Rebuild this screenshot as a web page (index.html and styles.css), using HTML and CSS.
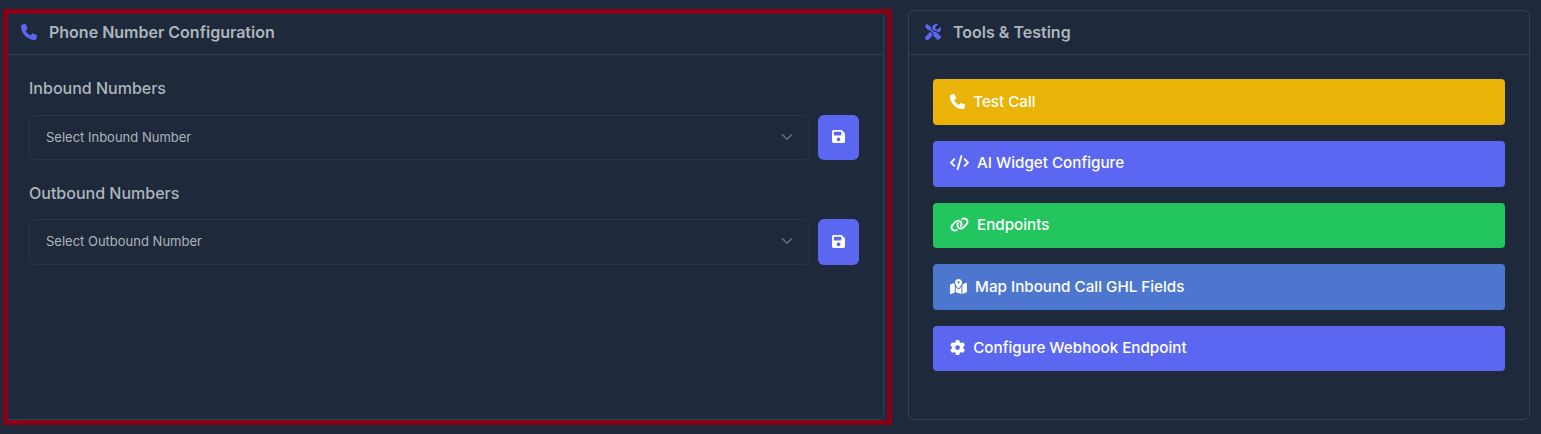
FILE: index.html
```html
<!DOCTYPE html>
<html lang="en">
<head>
<meta charset="utf-8">
<title>Phone Number Configuration</title>
<link rel="stylesheet" href="styles.css">
</head>
<body>
<main class="page">
  <section class="card card-phone">
    <header class="card-head">
      <svg class="icon head-icon" viewBox="0 0 512 512"><path d="M164.9 24.6c-7.7-18.6-28-28.5-47.4-23.2l-88 24C12.1 30.2 0 46 0 64C0 311.4 200.6 512 448 512c18 0 33.8-12.1 38.6-29.5l24-88c5.3-19.4-4.6-39.7-23.2-47.4l-96-40c-16.3-6.8-35.2-2.1-46.3 11.6L304.7 368C234.3 334.7 177.3 277.7 144 207.3L193.3 167c13.7-11.2 18.4-30 11.6-46.3l-40-96z"/></svg>
      <h2 class="card-title">Phone Number Configuration</h2>
    </header>
    <div class="card-body">
      <div class="field">
        <h3 class="field-label">Inbound Numbers</h3>
        <div class="field-row">
          <div class="select">
            <span>Select Inbound Number</span>
            <svg class="chevron" viewBox="0 0 16 16"><path d="M2 5l6 6 6-6"/></svg>
          </div>
          <button class="save" type="button"><svg class="icon icon-save" viewBox="0 0 448 512"><path d="M64 32C28.7 32 0 60.7 0 96V416c0 35.3 28.7 64 64 64H384c35.3 0 64-28.7 64-64V173.3c0-17-6.7-33.3-18.7-45.3L352 50.7C340 38.7 323.7 32 306.7 32H64zm0 96c0-17.7 14.3-32 32-32H288c17.7 0 32 14.3 32 32v64c0 17.7-14.3 32-32 32H96c-17.7 0-32-14.3-32-32V128zM224 288a64 64 0 1 1 0 128 64 64 0 1 1 0-128z"/></svg></button>
        </div>
      </div>
      <div class="field">
        <h3 class="field-label">Outbound Numbers</h3>
        <div class="field-row">
          <div class="select">
            <span>Select Outbound Number</span>
            <svg class="chevron" viewBox="0 0 16 16"><path d="M2 5l6 6 6-6"/></svg>
          </div>
          <button class="save" type="button"><svg class="icon icon-save" viewBox="0 0 448 512"><path d="M64 32C28.7 32 0 60.7 0 96V416c0 35.3 28.7 64 64 64H384c35.3 0 64-28.7 64-64V173.3c0-17-6.7-33.3-18.7-45.3L352 50.7C340 38.7 323.7 32 306.7 32H64zm0 96c0-17.7 14.3-32 32-32H288c17.7 0 32 14.3 32 32v64c0 17.7-14.3 32-32 32H96c-17.7 0-32-14.3-32-32V128zM224 288a64 64 0 1 1 0 128 64 64 0 1 1 0-128z"/></svg></button>
        </div>
      </div>
    </div>
  </section>

  <section class="card card-tools">
    <header class="card-head">
      <svg class="icon head-icon" viewBox="0 0 512 512"><path d="M78.6 5C69.1-2.4 55.6-1.5 47 7L7 47c-8.5 8.5-9.4 22-2.1 31.6l80 104c4.5 5.9 11.6 9.4 19 9.4h54.1l109 109c-14.7 29-10 65.4 14.3 89.6l112 112c12.5 12.5 32.8 12.5 45.3 0l64-64c12.5-12.5 12.5-32.8 0-45.3l-112-112c-24.2-24.2-60.6-29-89.6-14.3l-109-109V104c0-7.5-3.5-14.5-9.4-19L78.6 5zM19.9 396.1C7.2 408.8 0 426.1 0 444.1C0 481.6 30.4 512 67.9 512c18 0 35.3-7.2 48-19.9L233.7 374.3c-7.8-20.9-9-43.6-3.6-65.1l-61.7-61.7L19.9 396.1zM512 144c0-10.5-1.1-20.7-3.2-30.5c-2.4-11.2-16.1-14.1-24.2-6l-63.9 63.9c-3 3-7.1 4.7-11.3 4.7H352c-8.8 0-16-7.2-16-16V102.6c0-4.2 1.7-8.3 4.7-11.3l63.9-63.9c8.1-8.1 5.2-21.8-6-24.2C388.7 1.1 378.5 0 368 0C288.5 0 224 64.5 224 144l0 .8 85.3 85.3c36-9.1 75.8 .5 104 28.7L429 274.5c49-23 83-72.8 83-130.5z"/></svg>
      <h2 class="card-title">Tools &amp; Testing</h2>
    </header>
    <div class="card-body tool-list">
      <button class="tool tool-yellow" type="button">
        <svg class="icon tool-icon" viewBox="0 0 512 512"><path d="M164.9 24.6c-7.7-18.6-28-28.5-47.4-23.2l-88 24C12.1 30.2 0 46 0 64C0 311.4 200.6 512 448 512c18 0 33.8-12.1 38.6-29.5l24-88c5.3-19.4-4.6-39.7-23.2-47.4l-96-40c-16.3-6.8-35.2-2.1-46.3 11.6L304.7 368C234.3 334.7 177.3 277.7 144 207.3L193.3 167c13.7-11.2 18.4-30 11.6-46.3l-40-96z"/></svg>
        Test Call
      </button>
      <button class="tool tool-indigo" type="button">
        <svg class="icon tool-icon icon-wide" viewBox="0 0 640 512"><path d="M392.8 1.2c-17-4.9-34.7 5-39.6 22l-128 448c-4.9 17 5 34.7 22 39.6s34.7-5 39.6-22l128-448c4.9-17-5-34.7-22-39.6zm80.6 120.1c-12.5 12.5-12.5 32.8 0 45.3L562.7 256l-89.4 89.4c-12.5 12.5-12.5 32.8 0 45.3s32.8 12.5 45.3 0l112-112c12.5-12.5 12.5-32.8 0-45.3l-112-112c-12.5-12.5-32.8-12.5-45.3 0zm-306.7 0c-12.5-12.5-32.8-12.5-45.3 0l-112 112c-12.5 12.5-12.5 32.8 0 45.3l112 112c12.5 12.5 32.8 12.5 45.3 0s12.5-32.8 0-45.3L77.3 256l89.4-89.4c12.5-12.5 12.5-32.8 0-45.3z"/></svg>
        AI Widget Configure
      </button>
      <button class="tool tool-green" type="button">
        <svg class="icon tool-icon icon-wide" viewBox="0 0 640 512"><path d="M579.8 267.7c56.5-56.5 56.5-148 0-204.5c-50-50-128.8-56.5-186.3-15.4l-1.6 1.1c-14.4 10.3-17.7 30.3-7.4 44.6s30.3 17.7 44.6 7.4l1.6-1.1c32.1-22.9 76-19.3 103.8 8.6c31.5 31.5 31.5 82.5 0 114L422.3 334.8c-31.5 31.5-82.5 31.5-114 0c-27.9-27.9-31.5-71.8-8.6-103.8l1.1-1.6c10.3-14.4 6.9-34.4-7.4-44.6s-34.4-6.9-44.6 7.4l-1.1 1.6C206.5 251.2 213 330 263 380c56.5 56.5 148 56.5 204.5 0L579.8 267.7zM60.2 244.3c-56.5 56.5-56.5 148 0 204.5c50 50 128.8 56.5 186.3 15.4l1.6-1.1c14.4-10.3 17.7-30.3 7.4-44.6s-30.3-17.7-44.6-7.4l-1.6 1.1c-32.1 22.9-76 19.3-103.8-8.6C74 372 74 321 105.5 289.5L217.7 177.2c31.5-31.5 82.5-31.5 114 0c27.9 27.9 31.5 71.8 8.6 103.9l-1.1 1.6c-10.3 14.4-6.9 34.4 7.4 44.6s34.4 6.9 44.6-7.4l1.1-1.6C433.5 260.8 427 182 377 132c-56.5-56.5-148-56.5-204.5 0L60.2 244.3z"/></svg>
        Endpoints
      </button>
      <button class="tool tool-blue" type="button">
        <svg class="icon tool-icon icon-map" viewBox="0 0 576 512"><path d="M408 120c0 54.6-73.1 151.9-105.2 192c-7.7 9.6-22 9.6-29.6 0C241.1 271.9 168 174.6 168 120C168 53.7 221.7 0 288 0s120 53.7 120 120zm8 80.4c3.5-6.9 6.7-13.8 9.6-20.6c.5-1.2 1-2.5 1.5-3.7l116-46.4C558.9 123.4 576 135 576 152V422.8c0 9.8-6 18.6-15.1 22.3L416 503V200.4zM137.6 138.3c2.4 14.1 7.2 28.3 12.8 41.5c2.9 6.8 6.1 13.7 9.6 20.6V451.8L32.9 502.7C17.1 509 0 497.4 0 480.4V209.6c0-9.8 6-18.6 15.1-22.3l122.6-49zM327.8 332c13.9-17.4 35.7-45.7 56.2-77V504.3L192 449.4V255c20.5 31.3 42.3 59.6 56.2 77c20.5 25.6 59.1 25.6 79.6 0zM288 152a40 40 0 1 0 0-80 40 40 0 1 0 0 80z"/></svg>
        Map Inbound Call GHL Fields
      </button>
      <button class="tool tool-indigo" type="button">
        <svg class="icon tool-icon" viewBox="0 0 512 512"><path d="M495.9 166.6c3.2 8.7 .5 18.4-6.4 24.6l-43.3 39.4c1.1 8.3 1.7 16.8 1.7 25.4s-.6 17.1-1.7 25.4l43.3 39.4c6.9 6.2 9.6 15.9 6.4 24.6c-4.4 11.9-9.7 23.3-15.8 34.3l-4.7 8.1c-6.6 11-14 21.4-22.1 31.2c-5.9 7.2-15.7 9.6-24.5 6.8l-55.7-17.7c-13.4 10.3-28.2 18.9-44 25.4l-12.5 57.1c-2 9.1-9 16.3-18.2 17.8c-13.8 2.3-28 3.5-42.5 3.5s-28.7-1.2-42.5-3.5c-9.2-1.5-16.2-8.7-18.2-17.8l-12.5-57.1c-15.8-6.5-30.6-15.1-44-25.4L83.1 425.9c-8.8 2.8-18.6 .3-24.5-6.8c-8.1-9.8-15.5-20.2-22.1-31.2l-4.7-8.1c-6.1-11-11.4-22.4-15.8-34.3c-3.2-8.7-.5-18.4 6.4-24.6l43.3-39.4C64.6 273.1 64 264.6 64 256s.6-17.1 1.7-25.4L22.4 191.2c-6.9-6.2-9.6-15.9-6.4-24.6c4.4-11.9 9.7-23.3 15.8-34.3l4.7-8.1c6.6-11 14-21.4 22.1-31.2c5.9-7.2 15.7-9.6 24.5-6.8l55.7 17.7c13.4-10.3 28.2-18.9 44-25.4l12.5-57.1c2-9.1 9-16.3 18.2-17.8C227.3 1.2 241.5 0 256 0s28.7 1.2 42.5 3.5c9.2 1.5 16.2 8.7 18.2 17.8l12.5 57.1c15.8 6.5 30.6 15.1 44 25.4l55.7-17.7c8.8-2.8 18.6-.3 24.5 6.8c8.1 9.8 15.5 20.2 22.1 31.2l4.7 8.1c6.1 11 11.4 22.4 15.8 34.3zM256 336a80 80 0 1 0 0-160 80 80 0 1 0 0 160z"/></svg>
        Configure Webhook Endpoint
      </button>
    </div>
  </section>
  <div class="highlight" aria-hidden="true"></div>
</main>
</body>
</html>
```

FILE: styles.css
```css
* {
  box-sizing: border-box;
}

html,
body {
  margin: 0;
  height: 100%;
  background: #1e293b;
  overflow: hidden;
}

body {
  font-family: Inter, "Liberation Sans", sans-serif;
}

.page {
  position: relative;
  display: flex;
  gap: 24px;
  height: 434px;
  padding: 10px 11px 14px 4px;
}

.card {
  height: 410px;
  border: 1px solid #334155;
  border-radius: 6px;
  background: #1e293b;
}

.card-phone {
  width: 880px;
}

.card-tools {
  width: 622px;
}

.card-head {
  display: flex;
  align-items: center;
  gap: 12px;
  height: 44.35px;
  padding: 0 16px 1.5px;
  border-bottom: 1px solid #334155;
}

.card-title {
  margin: 0;
  font-size: 16px;
  font-weight: 600;
  line-height: 24px;
  color: #adb5bd;
}

.icon {
  flex: none;
  width: 16px;
  height: 16px;
  fill: currentColor;
}

.tool-icon {
  width: 15.2px;
  height: 15.2px;
}

.icon-wide {
  width: 19px;
}

.icon-map {
  width: 17.1px;
}

.icon-save {
  width: 13px;
  height: 15px;
}

.head-icon {
  color: #5b67f1;
}

.card-body {
  padding: 24px;
}

.field {
  margin-bottom: 24px;
}

.field-label {
  margin: 0 0 16px;
  font-size: 16px;
  font-weight: 500;
  line-height: 19.2px;
  color: #adb5bd;
}

.field-row {
  display: flex;
  gap: 8px;
}

.select {
  flex: 1;
  display: flex;
  align-items: center;
  justify-content: space-between;
  height: 45.6px;
  padding: 0 16px 1.5px;
  border: 1px solid #2b3648;
  border-radius: 6px;
  font-size: 13px;
  color: #adb5bd;
}

.chevron {
  width: 12px;
  height: 12px;
  fill: none;
  stroke: #6b7686;
  stroke-width: 1.6;
  stroke-linecap: round;
  stroke-linejoin: round;
}

.save {
  display: flex;
  align-items: center;
  justify-content: center;
  width: 41px;
  height: 45.6px;
  padding: 0 0 1px;
  border: 0;
  border-radius: 6px;
  background: #5b67f1;
  color: #fff;
}

.tool-list {
  display: flex;
  flex-direction: column;
  gap: 16px;
}

.tool {
  display: flex;
  align-items: center;
  gap: 8px;
  height: 45.6px;
  padding: 0 17px 1.6px;
  border: 0;
  border-radius: 4px;
  font-family: inherit;
  font-size: 15.2px;
  font-weight: 500;
  color: #fff;
}

.tool-yellow {
  background: #eab308;
}

.tool-indigo {
  background: #5b67f1;
}

.tool-green {
  background: #22c55e;
}

.tool-blue {
  background: #4d77cf;
}

.highlight {
  position: absolute;
  left: 3px;
  top: 9px;
  width: 889px;
  height: 416px;
  border: 5px solid #870016;
  pointer-events: none;
}
```
